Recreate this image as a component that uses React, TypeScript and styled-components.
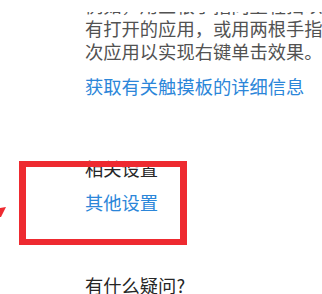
import styled, { createGlobalStyle } from "styled-components";

const GlobalStyle = createGlobalStyle`
  html, body {
    margin: 0;
    padding: 0;
    background: #ffffff;
  }
  body {
    font-family: "Noto Sans CJK SC", "Noto Sans", sans-serif;
  }
`;

const Page = styled.div`
  position: relative;
  width: 322px;
  height: 294px;
  overflow: hidden;
  background: #ffffff;
  display: flex;
  flex-direction: column;
  padding-left: 85px;
  box-sizing: border-box;
  font-size: 18.3px;
  line-height: 23px;
`;

const Description = styled.div`
  margin-top: -6px;
  color: #525252;
  clip-path: inset(18px 0 0 0);
`;

const Line = styled.div`
  white-space: nowrap;
`;

const Link = styled.a<{ $gap: number }>`
  display: block;
  margin-top: ${(p) => p.$gap}px;
  color: #2b86d9;
  text-decoration: none;
  white-space: nowrap;
`;

const Heading = styled.div<{ $gap: number }>`
  margin-top: ${(p) => p.$gap}px;
  color: #262626;
  white-space: nowrap;
`;

const Highlight = styled.div`
  position: absolute;
  left: 19px;
  top: 161px;
  width: 168px;
  height: 84px;
  box-sizing: border-box;
  border-style: solid;
  border-color: #ee2a30;
  border-width: 6px 7px 6px 7px;
`;

const Pointer = styled.svg`
  position: absolute;
  left: 0;
  top: 206px;
`;

export default function App() {
  return (
    <>
      <GlobalStyle />
      <Page>
        <Description>
          <Line>例如，用三根手指向上轻扫以查看所</Line>
          <Line>有打开的应用，或用两根手指点击一</Line>
          <Line>次应用以实现右键单击效果。</Line>
        </Description>
        <Link href="#" $gap={12}>获取有关触摸板的详细信息</Link>
        <Heading $gap={59}>相关设置</Heading>
        <Link href="#" $gap={11}>其他设置</Link>
        <Heading $gap={60}>有什么疑问?</Heading>
        <Highlight />
        <Pointer width="8" height="14" viewBox="0 0 8 14">
          <polygon points="0,2 6,1 1,11 0,11" fill="#ee2a30" />
        </Pointer>
      </Page>
    </>
  );
}
